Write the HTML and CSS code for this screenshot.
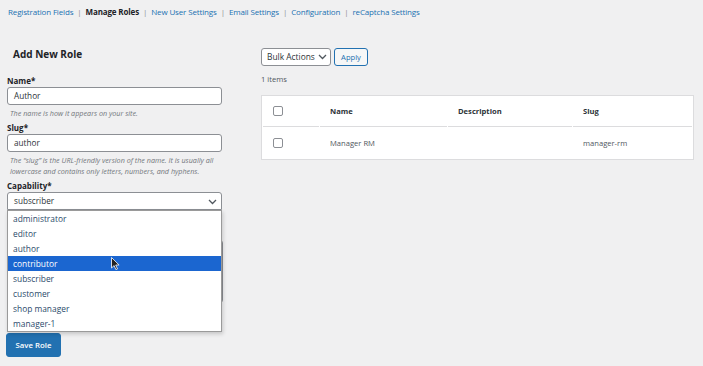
FILE: index.html
```html
<!DOCTYPE html>
<html>
<head>
<meta charset="utf-8">
<link rel="stylesheet" href="styles.css">
</head>
<body>
<nav class="tabs">
  <a href="#">Registration Fields</a><span class="sep">|</span><strong>Manage Roles</strong><span class="sep">|</span><a href="#">New User Settings</a><span class="sep">|</span><a href="#">Email Settings</a><span class="sep">|</span><a href="#">Configuration</a><span class="sep">|</span><a href="#">reCaptcha Settings</a>
</nav>
<div class="cols">
  <div class="left">
    <h2 class="title">Add New Role</h2>
    <label class="lbl">Name*</label>
    <div class="input">Author</div>
    <p class="help">The name is how it appears on your site.</p>
    <label class="lbl">Slug*</label>
    <div class="input">author</div>
    <p class="help">The “slug” is the URL-friendly version of the name. It is usually all lowercase and contains only letters, numbers, and hyphens.</p>
    <label class="lbl">Capability*</label>
    <div class="selwrap">
      <div class="input select">subscriber
        <svg class="chev" width="9" height="6" viewBox="0 0 9 6"><path d="M1 1l3.5 3.5L8 1" fill="none" stroke="#50575e" stroke-width="1.3"/></svg>
      </div>
      <ul class="menu">
        <li>administrator</li>
        <li>editor</li>
        <li>author</li>
        <li class="hl">contributor<svg class="cursor" width="9" height="13" viewBox="0 0 9 13"><path d="M0.5 0.5v10.5l2.6-2.4 1.8 4 1.6-.7-1.8-3.9h3.4z" fill="#222" stroke="#fff" stroke-width="0.8"/></svg></li>
        <li>subscriber</li>
        <li>customer</li>
        <li>shop manager</li>
        <li>manager-1</li>
      </ul>
    </div>
    <div class="textarea"></div>
    <button class="save">Save Role</button>
  </div>
  <div class="right">
    <div class="actions">
      <div class="bulk">Bulk Actions <svg width="9" height="6" viewBox="0 0 9 6"><path d="M1 1l3.5 3.5L8 1" fill="none" stroke="#50575e" stroke-width="1.3"/></svg></div>
      <button class="apply">Apply</button>
    </div>
    <div class="count">1 items</div>
    <table class="tbl">
      <thead>
        <tr><th class="cb"><span class="box"></span></th><th class="cname">Name</th><th class="cdesc">Description</th><th>Slug</th></tr>
      </thead>
      <tbody>
        <tr><td class="cb"><span class="box"></span></td><td>Manager RM</td><td></td><td>manager-rm</td></tr>
      </tbody>
    </table>
  </div>
</div>
</body>
</html>
```
FILE: styles.css
```css
* { box-sizing: border-box; }
body {
  margin: 0;
  background: #f0f0f1;
  font-family: "Open Sans", "Noto Sans", sans-serif;
  color: #2c3338;
}
.tabs {
  padding: 6px 8px 0;
  font-size: 8px;
  letter-spacing: -0.15px;
  line-height: 12px;
  height: 25px;
}
.tabs a { color: #2271b1; text-decoration: none; }
.tabs strong { color: #1d2327; font-weight: 700; }
.tabs .sep { color: #8c8f94; margin: 0 4px; }
.cols {
  display: flex;
  padding: 0 7px;
}
.left {
  width: 215px;
  display: flex;
  flex-direction: column;
}
.title {
  font-size: 10px;
  font-weight: 700;
  color: #1d2327;
  margin: 22px 0 0 6px;
  line-height: 14px;
  height: 28px;
}
.lbl {
  font-size: 8px;
  font-weight: 700;
  line-height: 11px;
  color: #1d2327;
  margin-bottom: 1px;
}
.input {
  height: 18px;
  background: #fff;
  border: 1px solid #8c8f94;
  border-radius: 3px;
  font-size: 8.2px;
  line-height: 16px;
  padding: 0 6px;
  color: #2c3338;
  position: relative;
}
.help {
  margin: 3px 0 3px 3px;
  font-size: 7.2px;
  font-style: italic;
  color: #72777c;
  line-height: 11px;
}
.selwrap { position: relative; }
.select { border-radius: 3px 3px 0 0; }
.chev { position: absolute; right: 4px; top: 6px; }
.menu {
  position: absolute;
  left: 0;
  top: 18px;
  width: 215px;
  margin: 0;
  padding: 0;
  list-style: none;
  background: #fff;
  border: 1px solid #9a9a9a;
  box-shadow: 1px 2px 4px rgba(0,0,0,0.18);
  z-index: 2;
}
.menu li {
  height: 15px;
  line-height: 15px;
  font-size: 8.4px;
  padding-left: 5px;
  color: #2b4a6b;
  position: relative;
}
.menu li.hl { background: #1b66d0; color: #fff; }
.cursor { position: absolute; left: 103px; top: 1px; }
.textarea {
  height: 63px;
  margin-top: 30px;
  width: 216px;
  background: #fff;
  border: 1px solid #8c8f94;
  border-radius: 3px;
}
.save {
  margin-top: 30px;
  margin-left: -1px;
  width: 55px;
  height: 24px;
  background: #2271b1;
  border: 1px solid #2271b1;
  border-radius: 3px;
  color: #fff;
  font-family: inherit;
  font-size: 7.8px;
  font-weight: 600;
  padding: 0;
}
.right {
  margin-left: 39px;
  width: 433px;
  padding-top: 23px;
}
.actions { display: flex; gap: 3px; }
.bulk {
  width: 70px;
  height: 18px;
  background: #fff;
  border: 1px solid #8c8f94;
  border-radius: 3px;
  font-size: 8.4px;
  line-height: 16px;
  padding-left: 5px;
  color: #2c3338;
  display: flex;
  align-items: center;
  gap: 3px;
}
.apply {
  width: 34px;
  height: 18px;
  background: #f6f7f7;
  border: 1px solid #2271b1;
  border-radius: 3px;
  color: #2271b1;
  font-family: inherit;
  font-size: 7.6px;
  padding: 0;
}
.count {
  font-size: 7.6px;
  color: #50575e;
  margin-top: 7px;
  line-height: 12px;
}
.tbl {
  margin-top: 10px;
  width: 433px;
  background: #fff;
  border: 1px solid #dcdcde;
  border-collapse: separate;
  border-spacing: 1px 0;
  font-size: 7.6px;
}
.tbl th {
  text-align: left;
  font-weight: 700;
  color: #2c3338;
  height: 31px;
  border-bottom: 1px solid #dcdcde;
  padding: 0 0 0 10px;
}
.tbl td {
  height: 32px;
  color: #50575e;
  padding: 0 0 0 10px;
}
.tbl .cb { width: 56px; }
.tbl .cname { width: 127px; }
.tbl .cdesc { width: 124px; }
.box {
  display: block;
  width: 10px;
  height: 10px;
  border: 1px solid #8c8f94;
  border-radius: 2px;
  background: #fff;
}
```
